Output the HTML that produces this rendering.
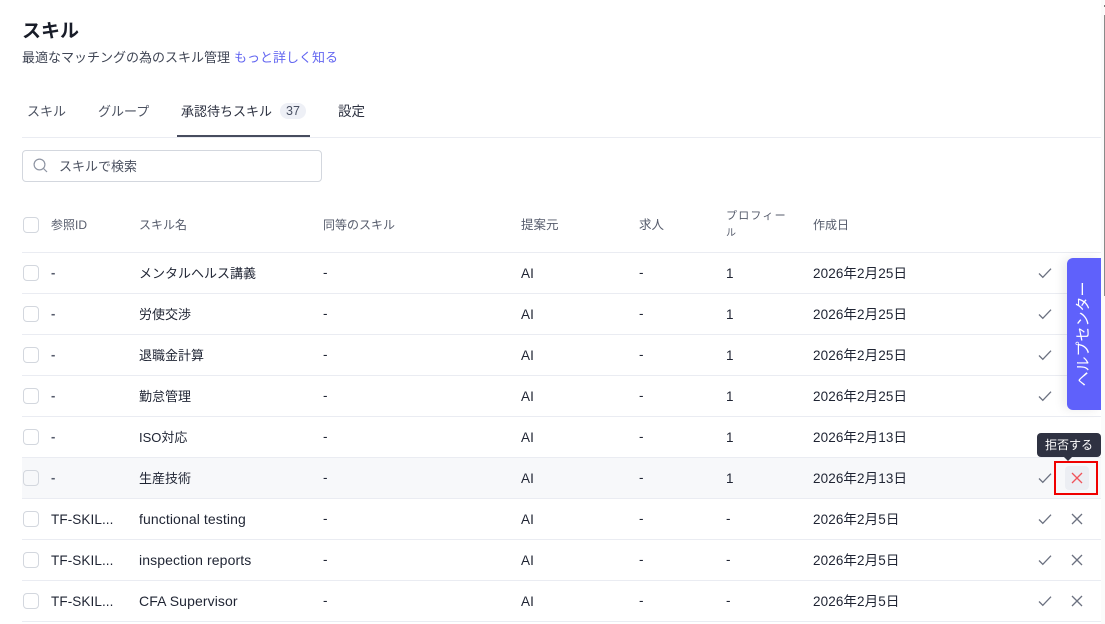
<!DOCTYPE html>
<html lang="ja"><head><meta charset="utf-8">
<style>
html,body{margin:0;padding:0;background:#fff}
body{width:1105px;height:624px;overflow:hidden;position:relative;font-family:"Liberation Sans","Noto Sans CJK JP",sans-serif;color:#1f2433}
.a{position:absolute;white-space:nowrap}
.t{font-size:13px;line-height:18px;color:#4b5160;top:103px}
.h{font-size:12px;line-height:18px;color:#555b6b}
.d{font-size:13.5px;line-height:18px;color:#1f2433;letter-spacing:.1px}
.j{font-size:13px;letter-spacing:0}
.n{font-size:14px;letter-spacing:.1px}
.dash{font-weight:700;color:#555b6b;font-size:13px}
.line{position:absolute;left:22px;width:1079px;height:1px;background:#eaecf2}
.cb{position:absolute;left:23px;width:14px;height:14px;border:1px solid #d3d7de;border-radius:4px;background:#fff}
svg{position:absolute;fill:none}
</style></head><body>
<div class="a" style="left:22px;top:20px;font-size:19px;line-height:24px;font-weight:700;color:#181c28">スキル</div>
<div class="a" style="left:22px;top:49px;font-size:13px;line-height:18px;color:#3f4554">最適なマッチングの為のスキル管理<span style="color:#6366f1;margin-left:4px">もっと詳しく知る</span></div>

<div class="a t" style="left:27px">スキル</div>
<div class="a t" style="left:98px">グループ</div>
<div class="a t" style="left:181px;color:#2c3140">承認待ちスキル</div>
<div class="a" style="left:280px;top:103px;width:26px;height:16px;border-radius:8px;background:#eef0f6;text-align:center;font-size:12.5px;line-height:16px;color:#4a5163">37</div>
<div class="a t" style="left:338px;font-size:13.5px;color:#2c3140">設定</div>
<div class="a" style="left:22px;top:137px;width:1079px;height:1px;background:#eaecf2"></div>
<div class="a" style="left:177px;top:135px;width:133px;height:2px;background:#474c5e"></div>

<div class="a" style="left:22px;top:150px;width:298px;height:30px;border:1px solid #d3d7de;border-radius:4px"></div>
<svg style="left:33px;top:158px" width="15" height="15" viewBox="0 0 15 15" stroke="#8f95a3" stroke-width="1.2"><circle cx="6.5" cy="6.5" r="5.4"/><path d="M10.5 10.5L14 14"/></svg>
<div class="a" style="left:59px;top:158px;font-size:13px;line-height:18px;color:#4b5160">スキルで検索</div>

<div class="cb" style="top:217px"></div>
<div class="a h" style="left:51px;top:216px">参照ID</div>
<div class="a h" style="left:139px;top:216px">スキル名</div>
<div class="a h" style="left:323px;top:216px">同等のスキル</div>
<div class="a h" style="left:521px;top:216px;font-size:12.5px">提案元</div>
<div class="a h" style="left:639px;top:216px;font-size:12.5px">求人</div>
<div class="a h" style="left:726px;top:207px;letter-spacing:1.2px;font-size:11px">プロフィー</div>
<div class="a h" style="left:726px;top:225px;font-size:10px">ル</div>
<div class="a h" style="left:813px;top:216px">作成日</div>

<div class="line" style="top:252px"></div>

<div class="a" style="left:22px;top:458px;width:1079px;height:40px;background:#f7f8fa"></div>

<!-- rows -->
<div class="line" style="top:293px"></div><div class="line" style="top:334px"></div><div class="line" style="top:375px"></div><div class="line" style="top:416px"></div><div class="line" style="top:457px"></div><div class="line" style="top:498px"></div><div class="line" style="top:539px"></div><div class="line" style="top:580px"></div><div class="line" style="top:621px"></div>

<div class="cb" style="top:265px"></div><div class="a d dash" style="left:51px;top:264px">-</div><div class="a d j" style="left:139px;top:265px">メンタルヘルス講義</div><div class="a d" style="left:323px;top:264px">-</div><div class="a d" style="left:521px;top:265px">AI</div><div class="a d" style="left:639px;top:264px">-</div><div class="a d" style="left:726px;top:265px">1</div><div class="a d" style="left:813px;top:265px">2026年2月25日</div>
<div class="cb" style="top:306px"></div><div class="a d dash" style="left:51px;top:305px">-</div><div class="a d j" style="left:139px;top:306px">労使交渉</div><div class="a d" style="left:323px;top:305px">-</div><div class="a d" style="left:521px;top:306px">AI</div><div class="a d" style="left:639px;top:305px">-</div><div class="a d" style="left:726px;top:306px">1</div><div class="a d" style="left:813px;top:306px">2026年2月25日</div>
<div class="cb" style="top:347px"></div><div class="a d dash" style="left:51px;top:346px">-</div><div class="a d j" style="left:139px;top:347px">退職金計算</div><div class="a d" style="left:323px;top:346px">-</div><div class="a d" style="left:521px;top:347px">AI</div><div class="a d" style="left:639px;top:346px">-</div><div class="a d" style="left:726px;top:347px">1</div><div class="a d" style="left:813px;top:347px">2026年2月25日</div>
<div class="cb" style="top:388px"></div><div class="a d dash" style="left:51px;top:387px">-</div><div class="a d j" style="left:139px;top:388px">勤怠管理</div><div class="a d" style="left:323px;top:387px">-</div><div class="a d" style="left:521px;top:388px">AI</div><div class="a d" style="left:639px;top:387px">-</div><div class="a d" style="left:726px;top:388px">1</div><div class="a d" style="left:813px;top:388px">2026年2月25日</div>
<div class="cb" style="top:429px"></div><div class="a d dash" style="left:51px;top:428px">-</div><div class="a d j" style="left:139px;top:429px">ISO対応</div><div class="a d" style="left:323px;top:428px">-</div><div class="a d" style="left:521px;top:429px">AI</div><div class="a d" style="left:639px;top:428px">-</div><div class="a d" style="left:726px;top:429px">1</div><div class="a d" style="left:813px;top:429px">2026年2月13日</div>
<div class="cb" style="top:470px;background:#f7f8fa"></div><div class="a d dash" style="left:51px;top:469px">-</div><div class="a d j" style="left:139px;top:470px">生産技術</div><div class="a d" style="left:323px;top:469px">-</div><div class="a d" style="left:521px;top:470px">AI</div><div class="a d" style="left:639px;top:469px">-</div><div class="a d" style="left:726px;top:470px">1</div><div class="a d" style="left:813px;top:470px">2026年2月13日</div>
<div class="cb" style="top:511px"></div><div class="a d" style="left:51px;top:511px">TF-SKIL...</div><div class="a d n" style="left:139px;top:510px">functional testing</div><div class="a d" style="left:323px;top:510px">-</div><div class="a d" style="left:521px;top:511px">AI</div><div class="a d" style="left:639px;top:510px">-</div><div class="a d" style="left:726px;top:510px">-</div><div class="a d" style="left:813px;top:511px">2026年2月5日</div>
<div class="cb" style="top:552px"></div><div class="a d" style="left:51px;top:552px">TF-SKIL...</div><div class="a d n" style="left:139px;top:551px">inspection reports</div><div class="a d" style="left:323px;top:551px">-</div><div class="a d" style="left:521px;top:552px">AI</div><div class="a d" style="left:639px;top:551px">-</div><div class="a d" style="left:726px;top:551px">-</div><div class="a d" style="left:813px;top:552px">2026年2月5日</div>
<div class="cb" style="top:593px"></div><div class="a d" style="left:51px;top:593px">TF-SKIL...</div><div class="a d n" style="left:139px;top:592px">CFA Supervisor</div><div class="a d" style="left:323px;top:592px">-</div><div class="a d" style="left:521px;top:593px">AI</div><div class="a d" style="left:639px;top:592px">-</div><div class="a d" style="left:726px;top:592px">-</div><div class="a d" style="left:813px;top:593px">2026年2月5日</div>

<!-- check icons -->
<svg style="left:1038px;top:267px" width="14" height="12" viewBox="0 0 14 12" stroke="#6b7180" stroke-width="1.3"><path d="M1 6.5L4.8 10.3L13 1.7"/></svg>
<svg style="left:1038px;top:308px" width="14" height="12" viewBox="0 0 14 12" stroke="#6b7180" stroke-width="1.3"><path d="M1 6.5L4.8 10.3L13 1.7"/></svg>
<svg style="left:1038px;top:349px" width="14" height="12" viewBox="0 0 14 12" stroke="#6b7180" stroke-width="1.3"><path d="M1 6.5L4.8 10.3L13 1.7"/></svg>
<svg style="left:1038px;top:390px" width="14" height="12" viewBox="0 0 14 12" stroke="#6b7180" stroke-width="1.3"><path d="M1 6.5L4.8 10.3L13 1.7"/></svg>
<svg style="left:1038px;top:472px" width="14" height="12" viewBox="0 0 14 12" stroke="#6b7180" stroke-width="1.3"><path d="M1 6.5L4.8 10.3L13 1.7"/></svg>
<svg style="left:1038px;top:513px" width="14" height="12" viewBox="0 0 14 12" stroke="#6b7180" stroke-width="1.3"><path d="M1 6.5L4.8 10.3L13 1.7"/></svg>
<svg style="left:1038px;top:554px" width="14" height="12" viewBox="0 0 14 12" stroke="#6b7180" stroke-width="1.3"><path d="M1 6.5L4.8 10.3L13 1.7"/></svg>
<svg style="left:1038px;top:595px" width="14" height="12" viewBox="0 0 14 12" stroke="#6b7180" stroke-width="1.3"><path d="M1 6.5L4.8 10.3L13 1.7"/></svg>

<!-- x icons -->
<svg style="left:1071px;top:513px" width="12" height="12" viewBox="0 0 12 12" stroke="#6b7180" stroke-width="1.3"><path d="M1 1L11 11M11 1L1 11"/></svg>
<svg style="left:1071px;top:554px" width="12" height="12" viewBox="0 0 12 12" stroke="#6b7180" stroke-width="1.3"><path d="M1 1L11 11M11 1L1 11"/></svg>
<svg style="left:1071px;top:595px" width="12" height="12" viewBox="0 0 12 12" stroke="#6b7180" stroke-width="1.3"><path d="M1 1L11 11M11 1L1 11"/></svg>

<!-- hover X -->
<div class="a" style="left:1065px;top:466px;width:24px;height:24px;border-radius:4px;background:#eceef3"></div>
<svg style="left:1071px;top:472px" width="12" height="12" viewBox="0 0 12 12" stroke="#f0535a" stroke-width="1.3"><path d="M1 1L11 11M11 1L1 11"/></svg>
<div class="a" style="left:1054px;top:461px;width:40px;height:30px;border:2px solid #f00000"></div>

<!-- tooltip -->
<div class="a" style="left:1037px;top:433px;width:64px;height:24px;border-radius:4px;background:#2f3242;color:#fff;text-align:center;font-size:12px;line-height:24px">拒否する</div>
<div class="a" style="left:1064px;top:457px;width:0;height:0;border-left:4px solid transparent;border-right:4px solid transparent;border-top:4px solid #2f3242"></div>

<!-- help tab -->
<div class="a" style="left:1067px;top:258px;width:34px;height:152px;background:#5f61fb;border-radius:6px 0 0 6px;box-shadow:-4px 0 10px rgba(0,0,0,.08)"></div>
<div class="a" style="left:1008px;top:325px;width:152px;height:18px;transform:rotate(-90deg);color:#fff;text-align:center;font-size:15px;line-height:18px">ヘルプセンター</div>

<!-- scrollbar -->
<div class="a" style="left:1101px;top:0;width:4px;height:624px;background:#fbfbfb"></div>
<div class="a" style="left:1104px;top:5px;width:1px;height:2px;background:#777"></div>
<div class="a" style="left:1104px;top:15px;width:1px;height:281px;background:#8a8a8a"></div>
</body></html>
